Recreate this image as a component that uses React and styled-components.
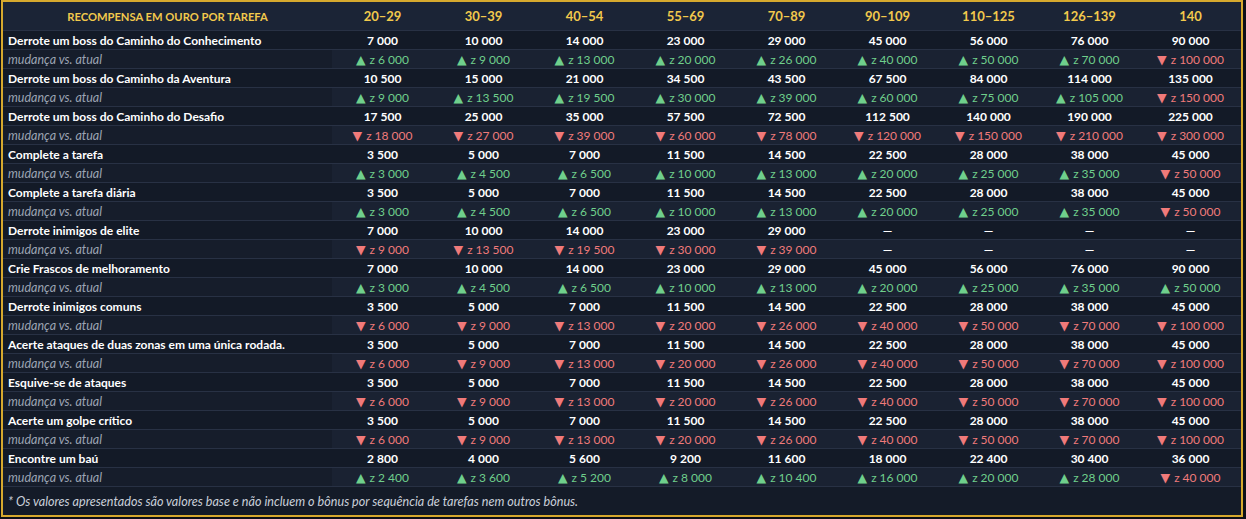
import React from 'react'
import styled, { createGlobalStyle } from 'styled-components'

const GlobalStyle = createGlobalStyle`
  html, body {
    margin: 0;
    padding: 0;
    background: #0c1018;
  }
  body {
    font-family: Lato, "Noto Sans", sans-serif;
  }
`

const Frame = styled.div`
  box-sizing: border-box;
  width: 1242px;
  height: 517px;
  margin-left: 1px;
  border: 2px solid #d6a92e;
  background: #141b28;
  display: flex;
  flex-direction: column;
`

const Row = styled.div`
  box-sizing: border-box;
  display: grid;
  grid-template-columns: 329px repeat(9, 101px);
  height: ${p => (p.$head ? 29 : 19)}px;
  border-bottom: 1px solid #283144;
  background: ${p => (p.$head ? '#1b2436' : p.$sub ? '#1a2232' : '#131a27')};
`

const Label = styled.div`
  display: flex;
  align-items: center;
  padding-left: 5px;
  white-space: nowrap;
  font-size: ${p => (p.$sub ? 12.5 : 12)}px;
  color: ${p => (p.$sub ? '#9ca4b3' : '#ffffff')};
  font-weight: ${p => (p.$sub ? 400 : 700)};
  font-style: ${p => (p.$sub ? 'italic' : 'normal')};
  background: ${p => (p.$sub ? '#161d2b' : 'transparent')};
`

const HeadLabel = styled.div`
  display: flex;
  align-items: center;
  justify-content: center;
  font-size: 11.2px;
  font-weight: 700;
  color: #f2c94c;
`

const HeadCell = styled.div`
  display: flex;
  align-items: center;
  justify-content: center;
  font-size: 13px;
  font-weight: 700;
  color: #f2c94c;
`

const Value = styled.div`
  display: flex;
  align-items: center;
  justify-content: center;
  white-space: nowrap;
  font-size: 12px;
  font-weight: ${p => (p.$tone ? 400 : 700)};
  color: ${p => (p.$tone === 'up' ? '#6fcf8c' : p.$tone === 'down' ? '#f07a7a' : '#ffffff')};
`

const Arrow = styled.span`
  font-family: "DejaVu Sans", sans-serif;
  font-size: 12.5px;
  margin-right: 4px;
`

const Footnote = styled.div`
  flex: 1;
  display: flex;
  align-items: center;
  padding-left: 5px;
  font-size: 12.6px;
  font-style: italic;
  color: #c9cfd9;
`

const LEVELS = ['20–29', '30–39', '40–54', '55–69', '70–89', '90–109', '110–125', '126–139', '140']

const n = s => s.replace(/ /g, '\u00a0')

const up = v => ['up', v]
const dn = v => ['down', v]

const BOSS_KNOW = ['7 000', '10 000', '14 000', '23 000', '29 000', '45 000', '56 000', '76 000', '90 000']
const TASK = ['3 500', '5 000', '7 000', '11 500', '14 500', '22 500', '28 000', '38 000', '45 000']
const TASK_CHANGE = [up('3 000'), up('4 500'), up('6 500'), up('10 000'), up('13 000'), up('20 000'), up('25 000'), up('35 000'), dn('50 000')]
const MINUS = [dn('6 000'), dn('9 000'), dn('13 000'), dn('20 000'), dn('26 000'), dn('40 000'), dn('50 000'), dn('70 000'), dn('100 000')]

const ROWS = [
  {
    name: 'Derrote um boss do Caminho do Conhecimento',
    values: BOSS_KNOW,
    changes: [up('6 000'), up('9 000'), up('13 000'), up('20 000'), up('26 000'), up('40 000'), up('50 000'), up('70 000'), dn('100 000')],
  },
  {
    name: 'Derrote um boss do Caminho da Aventura',
    values: ['10 500', '15 000', '21 000', '34 500', '43 500', '67 500', '84 000', '114 000', '135 000'],
    changes: [up('9 000'), up('13 500'), up('19 500'), up('30 000'), up('39 000'), up('60 000'), up('75 000'), up('105 000'), dn('150 000')],
  },
  {
    name: 'Derrote um boss do Caminho do Desafio',
    values: ['17 500', '25 000', '35 000', '57 500', '72 500', '112 500', '140 000', '190 000', '225 000'],
    changes: [dn('18 000'), dn('27 000'), dn('39 000'), dn('60 000'), dn('78 000'), dn('120 000'), dn('150 000'), dn('210 000'), dn('300 000')],
  },
  { name: 'Complete a tarefa', values: TASK, changes: TASK_CHANGE },
  { name: 'Complete a tarefa diária', values: TASK, changes: TASK_CHANGE },
  {
    name: 'Derrote inimigos de elite',
    values: ['7 000', '10 000', '14 000', '23 000', '29 000', '—', '—', '—', '—'],
    changes: [dn('9 000'), dn('13 500'), dn('19 500'), dn('30 000'), dn('39 000'), null, null, null, null],
  },
  {
    name: 'Crie Frascos de melhoramento',
    values: BOSS_KNOW,
    changes: [up('3 000'), up('4 500'), up('6 500'), up('10 000'), up('13 000'), up('20 000'), up('25 000'), up('35 000'), up('50 000')],
  },
  { name: 'Derrote inimigos comuns', values: TASK, changes: MINUS },
  { name: 'Acerte ataques de duas zonas em uma única rodada.', values: TASK, changes: MINUS },
  { name: 'Esquive-se de ataques', values: TASK, changes: MINUS },
  { name: 'Acerte um golpe crítico', values: TASK, changes: MINUS },
  {
    name: 'Encontre um baú',
    values: ['2 800', '4 000', '5 600', '9 200', '11 600', '18 000', '22 400', '30 400', '36 000'],
    changes: [up('2 400'), up('3 600'), up('5 200'), up('8 000'), up('10 400'), up('16 000'), up('20 000'), up('28 000'), dn('40 000')],
  },
]

function ChangeCell({ change }) {
  if (!change) return <Value>—</Value>
  const [tone, amount] = change
  return (
    <Value $tone={tone}>
      <Arrow>{tone === 'up' ? '▲' : '▼'}</Arrow>
      {n('z ' + amount)}
    </Value>
  )
}

export default function App() {
  return (
    <>
      <GlobalStyle />
      <Frame>
        <Row $head>
          <HeadLabel>RECOMPENSA EM OURO POR TAREFA</HeadLabel>
          {LEVELS.map(l => (
            <HeadCell key={l}>{l}</HeadCell>
          ))}
        </Row>
        {ROWS.map(row => (
          <React.Fragment key={row.name}>
            <Row>
              <Label>{row.name}</Label>
              {row.values.map((v, i) => (
                <Value key={i}>{n(v)}</Value>
              ))}
            </Row>
            <Row $sub>
              <Label $sub>mudança vs. atual</Label>
              {row.changes.map((c, i) => (
                <ChangeCell key={i} change={c} />
              ))}
            </Row>
          </React.Fragment>
        ))}
        <Footnote>
          * Os valores apresentados são valores base e não incluem o bônus por sequência de tarefas nem outros bônus.
        </Footnote>
      </Frame>
    </>
  )
}
